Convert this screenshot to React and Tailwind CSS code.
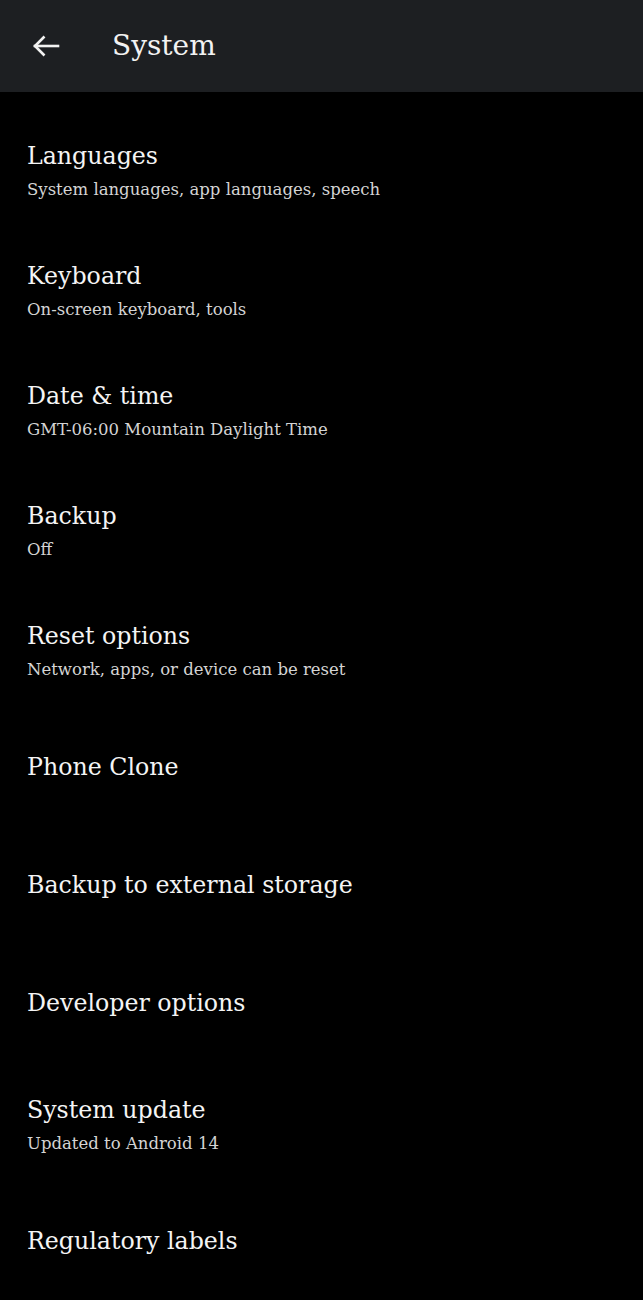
import React from "react";

const items = [
  { title: "Languages", sub: "System languages, app languages, speech" },
  { title: "Keyboard", sub: "On-screen keyboard, tools" },
  { title: "Date & time", sub: "GMT-06:00 Mountain Daylight Time" },
  { title: "Backup", sub: "Off" },
  { title: "Reset options", sub: "Network, apps, or device can be reset" },
  { title: "Phone Clone" },
  { title: "Backup to external storage" },
  { title: "Developer options" },
  { title: "System update", sub: "Updated to Android 14" },
  { title: "Regulatory labels" },
];

function Row({ title, sub }) {
  if (sub) {
    return (
      <div className="h-[120px] flex flex-col justify-center px-[27px] pb-[6px]">
        <div className="text-[23.7px] leading-[32px] text-[#f4f4f4]">{title}</div>
        <div className="mt-[6px] text-[16.5px] leading-[24px] text-[#d4d4d4]">{sub}</div>
      </div>
    );
  }
  return (
    <div className="h-[118px] flex flex-col justify-center px-[27px] pb-[13px]">
      <div className="text-[23.7px] leading-[32px] text-[#f4f4f4]">{title}</div>
    </div>
  );
}

export default function App() {
  return (
    <div
      className="w-[643px] h-[1300px] bg-black overflow-hidden"
      style={{ fontFamily: '"DejaVu Serif", serif' }}
    >
      <div className="h-[92px] bg-[#1d1f22] flex items-center">
        <div className="w-[112px] flex items-center pl-[32px]">
          <svg width="28" height="24" viewBox="0 0 28 24" fill="none" stroke="#f2f2f2" strokeWidth="2.6" strokeLinecap="square">
            <path d="M3 12H26" />
            <path d="M12.5 2.5L3 12l9.5 9.5" strokeLinecap="butt" />
          </svg>
        </div>
        <div className="text-[28px] leading-[36px] text-[#f2f2f2]">System</div>
      </div>
      <div className="pt-[22px]">
        {items.map((it) => (
          <Row key={it.title} {...it} />
        ))}
      </div>
    </div>
  );
}
